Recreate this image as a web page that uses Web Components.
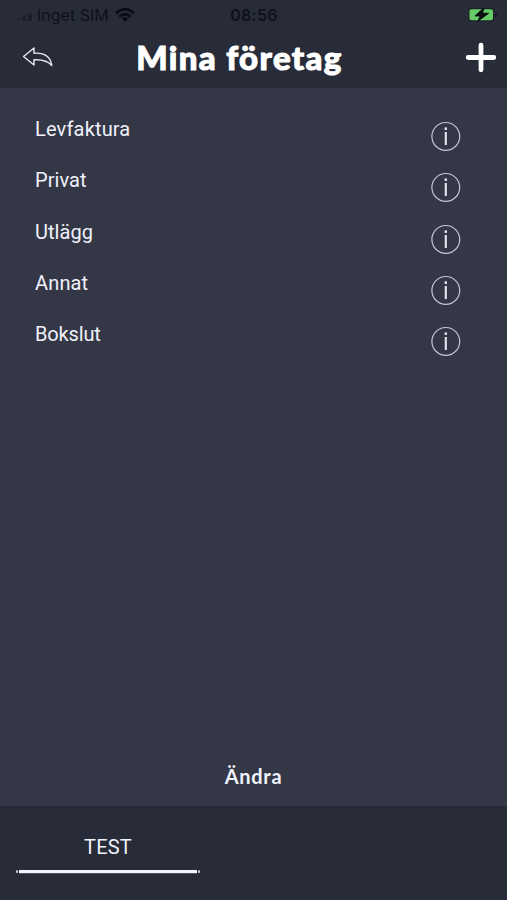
<!DOCTYPE html>
<html lang="sv">
<head>
<meta charset="utf-8">
<title>Mina företag</title>
<style>
    body {
        margin: 0;
        background: #343846;
        color: #f0f1fb;
        font-family: Roboto, "Liberation Sans", sans-serif;
    }
</style>
</head>
<body>
<company-page>
    <status-bar slot="header" carrier="Inget SIM" time="08:56"></status-bar>
    <page-header slot="header">Mina företag</page-header>
    <company-row>Levfaktura</company-row>
    <company-row style="--spacing: 0.05px">Privat</company-row>
    <company-row style="--spacing: 0.05px">Utlägg</company-row>
    <company-row>Annat</company-row>
    <company-row style="--spacing: -0.15px">Bokslut</company-row>
    <span slot="action">Ändra</span>
    <tab-bar slot="footer">TEST</tab-bar>
</company-page>

<script>
class CompanyPage extends HTMLElement {

    constructor() {
        super();
        this.shadow = this.attachShadow({ mode: 'open' });
    }

    connectedCallback() {
        this.render();
    }

    render() {

        this.shadow.innerHTML =
        `
        <style>
            :host {
                display: flex;
                flex-direction: column;
                height: 900px;
                overflow: hidden;
            }

            header {
                height: 88px;
                background: #282c39;
            }

            main {
                flex: 1;
                padding: 28px 46px 0 35px;
            }

            .action {
                height: 42px;
                text-align: center;
                font: 700 20px/24px Lato, sans-serif;
                letter-spacing: 0.7px;
            }
        </style>

        <header><slot name="header"></slot></header>
        <main><slot></slot></main>
        <div class="action"><slot name="action"></slot></div>
        <slot name="footer"></slot>
        `;
    }
}

customElements.define('company-page', CompanyPage);

class StatusBar extends HTMLElement {

    constructor() {
        super();
        this.shadow = this.attachShadow({ mode: 'open' });
    }

    connectedCallback() {
        this.render();
    }

    render() {

        this.shadow.innerHTML =
        `
        <style>
            :host {
                display: grid;
                grid-template-columns: 1fr auto 1fr;
                align-items: center;
                height: 30px;
                padding: 0 9px 0 10px;
                color: #0e111a;
                font: 400 16px/30px Inter, sans-serif;
            }

            .carrier {
                display: flex;
                align-items: center;
            }

            .carrier span {
                margin: 0 6px 0 4px;
                letter-spacing: 0;
            }

            .time {
                font-weight: 600;
                font-size: 16px;
                letter-spacing: 0.25px;
            }

            .battery {
                justify-self: end;
            }

            svg {
                display: block;
            }
        </style>

        <div class="carrier">
            <svg width="23" height="14" fill="#171b26">
                <rect x="1" y="10" width="3" height="2" opacity=".35"/>
                <rect x="7" y="9" width="3" height="3" opacity=".4"/>
                <rect x="12" y="7" width="4" height="6" opacity=".65"/>
                <rect x="18" y="5" width="4" height="8" opacity=".8"/>
            </svg>
            <span>${this.getAttribute('carrier')}</span>
            <svg width="20" height="16" viewBox="0 0 20 16" fill="none" stroke="#090c14" stroke-width="2.8">
                <path d="M1 6.2Q10-2 19 6.2"/>
                <path d="M4.3 9.8Q10 4.7 15.7 9.8"/>
                <path d="M6.8 11.6Q10 9 13.2 11.6L10 15Z" fill="#090c14" stroke="none"/>
            </svg>
        </div>
        <div class="time">${this.getAttribute('time')}</div>
        <svg class="battery" width="30" height="18" viewBox="0 0 30 18">
            <rect x="0.3" y="2" width="26" height="13.4" rx="3" fill="#1b2325"/>
            <rect x="1.5" y="3.2" width="23.5" height="11" rx="2" fill="#66cb66"/>
            <path d="M27.2 7v4q2-.5 2-2t-2-2" fill="#151b22"/>
            <path d="M15.8 2L7 9.9h5.3L9.8 15.2 20.6 7.3h-6z" fill="#080d10" stroke="#080d10" stroke-width="1" stroke-linejoin="round"/>
        </svg>
        `;
    }
}

customElements.define('status-bar', StatusBar);

class PageHeader extends HTMLElement {

    constructor() {
        super();
        this.shadow = this.attachShadow({ mode: 'open' });
    }

    connectedCallback() {
        this.render();
    }

    render() {

        this.shadow.innerHTML =
        `
        <style>
            :host {
                display: grid;
                grid-template-columns: 38px 1fr 78px;
                align-items: center;
                height: 56px;
                padding: 0 10px 0 22px;
            }

            h1 {
                margin: 0 0 2px;
                color: #fff;
                text-align: center;
                white-space: nowrap;
                font: 900 33px/40px Lato, sans-serif;
                letter-spacing: 1.35px;
                -webkit-text-stroke: 1px #fff;
            }

            svg {
                display: block;
            }

            .plus {
                justify-self: end;
            }
        </style>

        <svg width="32" height="24" viewBox="0 0 32 24" fill="none" stroke="#e5e7f1" stroke-width="1.4" stroke-linejoin="round">
            <path d="M1.5 10.5L12 2V7.2C22 6.6 28.5 10.5 29.8 19.5C25.5 14.3 20 13.4 12 13.8V19Z"/>
        </svg>
        <h1><slot></slot></h1>
        <svg class="plus" width="32" height="32" stroke="#fff" stroke-width="4.8" stroke-linecap="round">
            <path d="M16 3.2V27.8M3.2 15.5H28.8"/>
        </svg>
        `;
    }
}

customElements.define('page-header', PageHeader);

class CompanyRow extends HTMLElement {

    constructor() {
        super();
        this.shadow = this.attachShadow({ mode: 'open' });
    }

    connectedCallback() {
        this.render();
    }

    render() {

        this.shadow.innerHTML =
        `
        <style>
            :host {
                display: flex;
                justify-content: space-between;
                align-items: flex-start;
                height: 51.25px;
                font-size: 20px;
                line-height: 26px;
                letter-spacing: var(--spacing, 0.15px);
            }

            svg {
                display: block;
                margin-top: 5px;
            }
        </style>

        <span><slot></slot></span>
        <svg width="30" height="30" viewBox="0 0 30 30">
            <circle cx="14.8" cy="15.4" r="13.9" fill="none" stroke="#c4c7d3" stroke-width="1.2"/>
            <path d="M14.8 11V24" stroke="#e4e6f0" stroke-width="2.1"/>
            <rect x="13.6" y="6.4" width="2.4" height="2.5" fill="#e4e6f0"/>
        </svg>
        `;
    }
}

customElements.define('company-row', CompanyRow);

class TabBar extends HTMLElement {

    constructor() {
        super();
        this.shadow = this.attachShadow({ mode: 'open' });
    }

    connectedCallback() {
        this.render();
    }

    render() {

        this.shadow.innerHTML =
        `
        <style>
            :host {
                display: block;
                height: 94px;
                padding: 28px 16px 0;
                box-sizing: border-box;
                background: #282c39;
            }

            .tab {
                width: 184px;
                text-align: center;
                font-size: 20px;
                line-height: 27px;
                letter-spacing: 0.2px;
            }

            svg {
                display: block;
                margin-top: 8px;
            }
        </style>

        <div class="tab">
            <slot></slot>
            <svg width="184" height="6" fill="#f4f5fc">
                <rect x="3" y="1" width="178" height="3.2"/>
                <rect x="0" y="1.4" width="2" height="2.4" opacity=".8"/>
                <rect x="182" y="1.4" width="2" height="2.4" opacity=".8"/>
            </svg>
        </div>
        `;
    }
}

customElements.define('tab-bar', TabBar);
</script>
</body>
</html>
